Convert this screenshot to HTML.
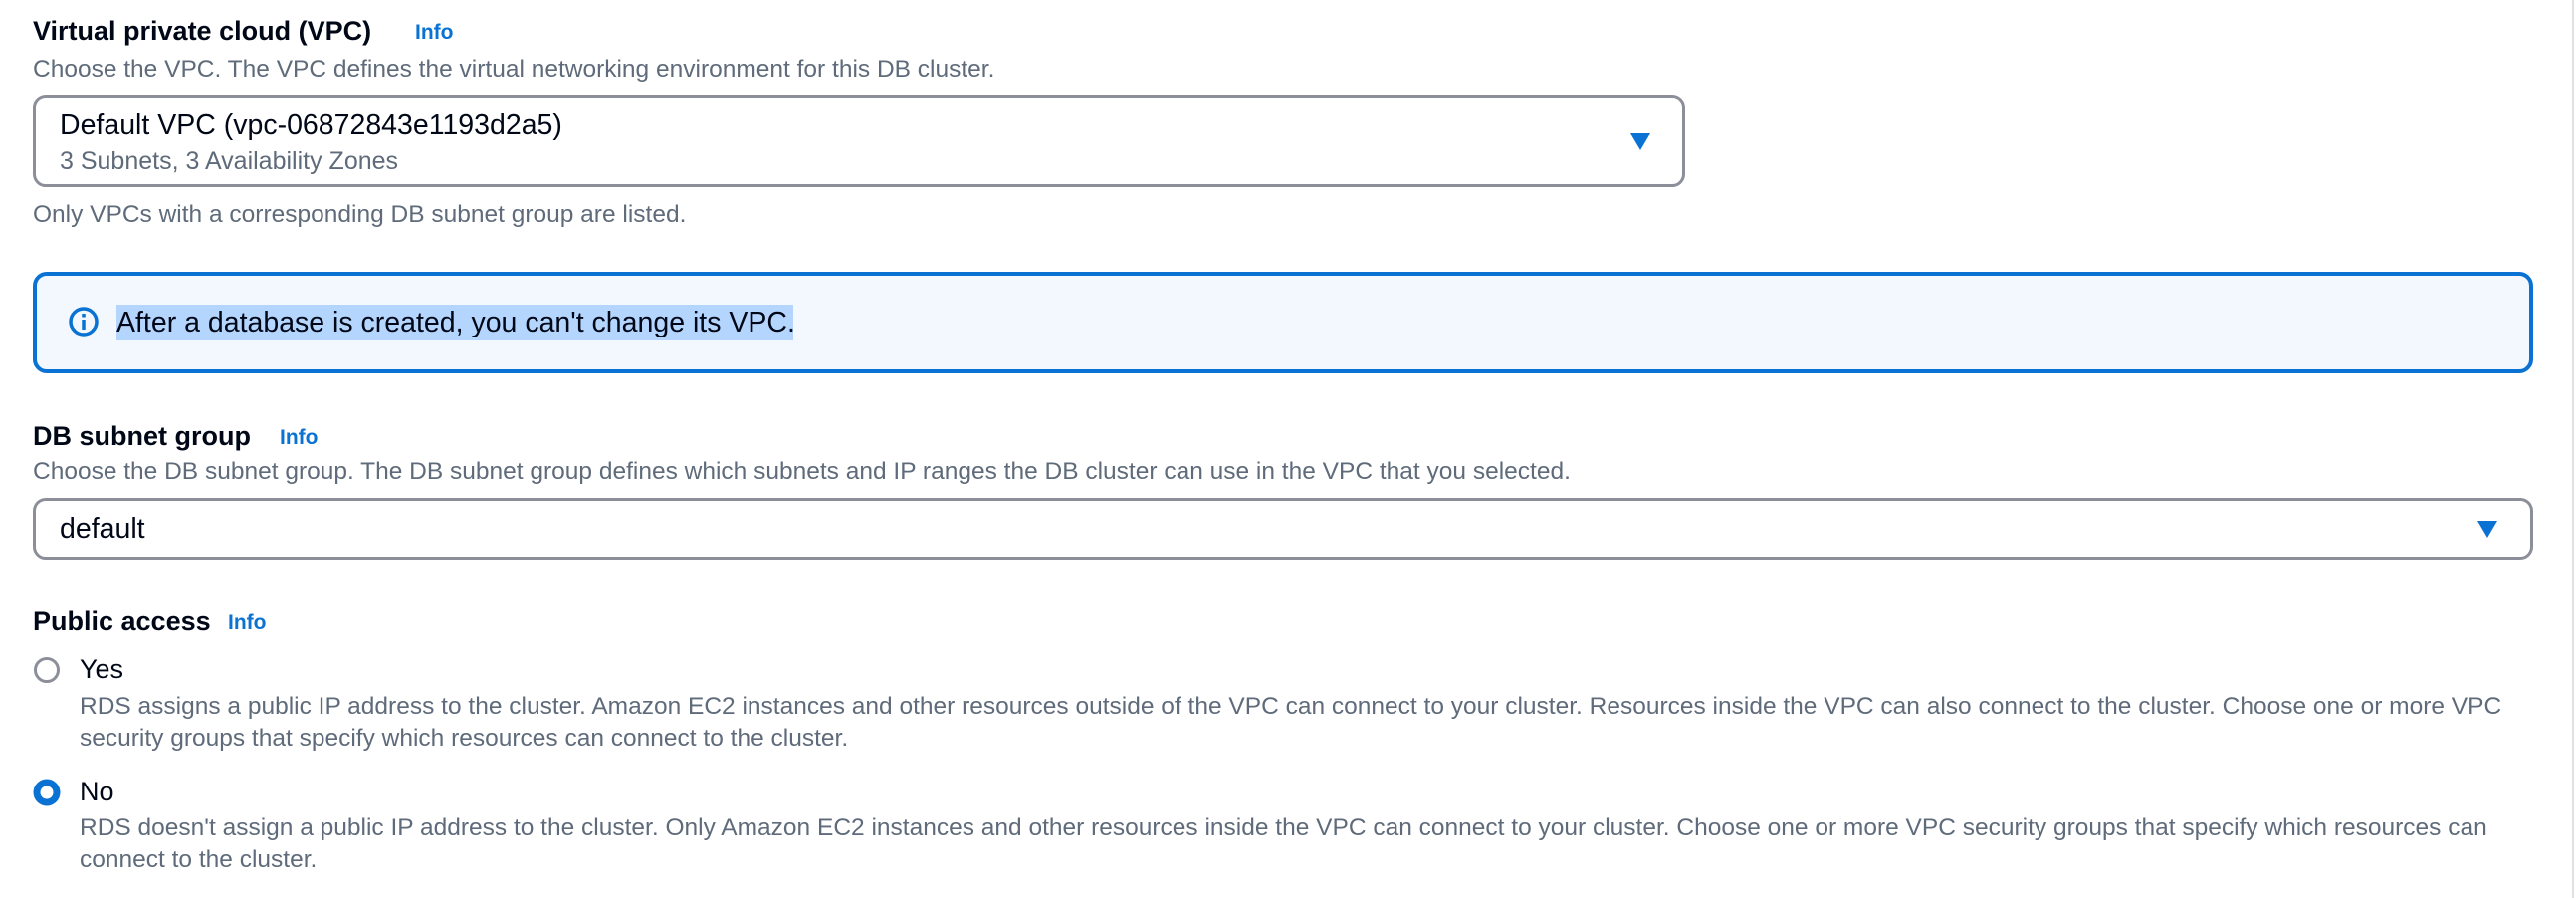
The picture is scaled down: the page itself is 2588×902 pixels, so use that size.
<!DOCTYPE html>
<html><head><meta charset="utf-8"><style>
*{margin:0;padding:0;box-sizing:border-box}
body{width:2588px;height:902px;background:#fff;position:relative;overflow:hidden;font-family:"Liberation Sans",sans-serif;color:#000716}
.a{position:absolute;white-space:nowrap;line-height:1}
.h{font-weight:bold;font-size:27px}
.info{color:#0972d3;font-weight:bold;font-size:21px}
.d{color:#5f6b7a;font-size:24.5px}
.box{position:absolute;border:3px solid #8c8f99;border-radius:13px;background:#fff}
.arr{position:absolute;width:0;height:0;border-left:10px solid transparent;border-right:10px solid transparent;border-top:17px solid #0972d3}
.t{font-size:27px}
</style></head><body>
<div class="a h" style="left:33px;top:18px">Virtual private cloud (VPC)</div>
<div class="a info" style="left:417px;top:22px">Info</div>
<div class="a d" style="left:33px;top:58px">Choose the VPC. The VPC defines the virtual networking environment for this DB cluster.</div>
<div class="box" style="left:33px;top:95px;width:1660px;height:93px"></div>
<div class="a t" style="left:60px;top:112px;font-size:28.5px">Default VPC (vpc-06872843e1193d2a5)</div>
<div class="a d" style="left:60px;top:150px;font-size:25px">3 Subnets, 3 Availability Zones</div>
<div class="arr" style="left:1638px;top:134px"></div>
<div class="a d" style="left:33px;top:204px">Only VPCs with a corresponding DB subnet group are listed.</div>

<div style="position:absolute;left:33px;top:273px;width:2512px;height:102px;border:4px solid #0972d3;border-radius:14px;background:#f2f8fd"></div>
<svg style="position:absolute;left:68px;top:307px" width="32" height="32" viewBox="0 0 32 32"><circle cx="16" cy="16" r="13" fill="none" stroke="#0972d3" stroke-width="3.5"/><line x1="16" y1="14" x2="16" y2="24" stroke="#0972d3" stroke-width="3.5"/><line x1="16" y1="8" x2="16" y2="11.5" stroke="#0972d3" stroke-width="3.5"/></svg>
<div style="position:absolute;left:117px;top:306px;width:680px;height:36px;background:#b4d5fe"></div>
<div class="a t" style="left:117px;top:310px;font-size:28.5px">After a database is created, you can't change its VPC.</div>

<div class="a h" style="left:33px;top:425px">DB subnet group</div>
<div class="a info" style="left:281px;top:429px">Info</div>
<div class="a d" style="left:33px;top:462px">Choose the DB subnet group. The DB subnet group defines which subnets and IP ranges the DB cluster can use in the VPC that you selected.</div>
<div class="box" style="left:33px;top:500px;width:2512px;height:62px"></div>
<div class="a t" style="left:60px;top:517px;font-size:28.5px">default</div>
<div class="arr" style="left:2489px;top:523px"></div>

<div class="a h" style="left:33px;top:611px">Public access</div>
<div class="a info" style="left:229px;top:615px">Info</div>
<svg style="position:absolute;left:33px;top:659px" width="28" height="28"><circle cx="14" cy="14" r="11.5" fill="#fff" stroke="#8c8f99" stroke-width="3"/></svg>
<div class="a t" style="left:80px;top:659px">Yes</div>
<div class="a d" style="left:80px;top:698px">RDS assigns a public IP address to the cluster. Amazon EC2 instances and other resources outside of the VPC can connect to your cluster. Resources inside the VPC can also connect to the cluster. Choose one or more VPC</div>
<div class="a d" style="left:80px;top:730px">security groups that specify which resources can connect to the cluster.</div>
<svg style="position:absolute;left:33px;top:782px" width="28" height="28"><circle cx="14" cy="14" r="10" fill="#fff" stroke="#0972d3" stroke-width="7"/></svg>
<div class="a t" style="left:80px;top:782px">No</div>
<div class="a d" style="left:80px;top:820px">RDS doesn't assign a public IP address to the cluster. Only Amazon EC2 instances and other resources inside the VPC can connect to your cluster. Choose one or more VPC security groups that specify which resources can</div>
<div class="a d" style="left:80px;top:852px">connect to the cluster.</div>
<div style="position:absolute;left:2584px;top:0;width:2px;height:902px;background:#e0e0e0"></div>
</body></html>
